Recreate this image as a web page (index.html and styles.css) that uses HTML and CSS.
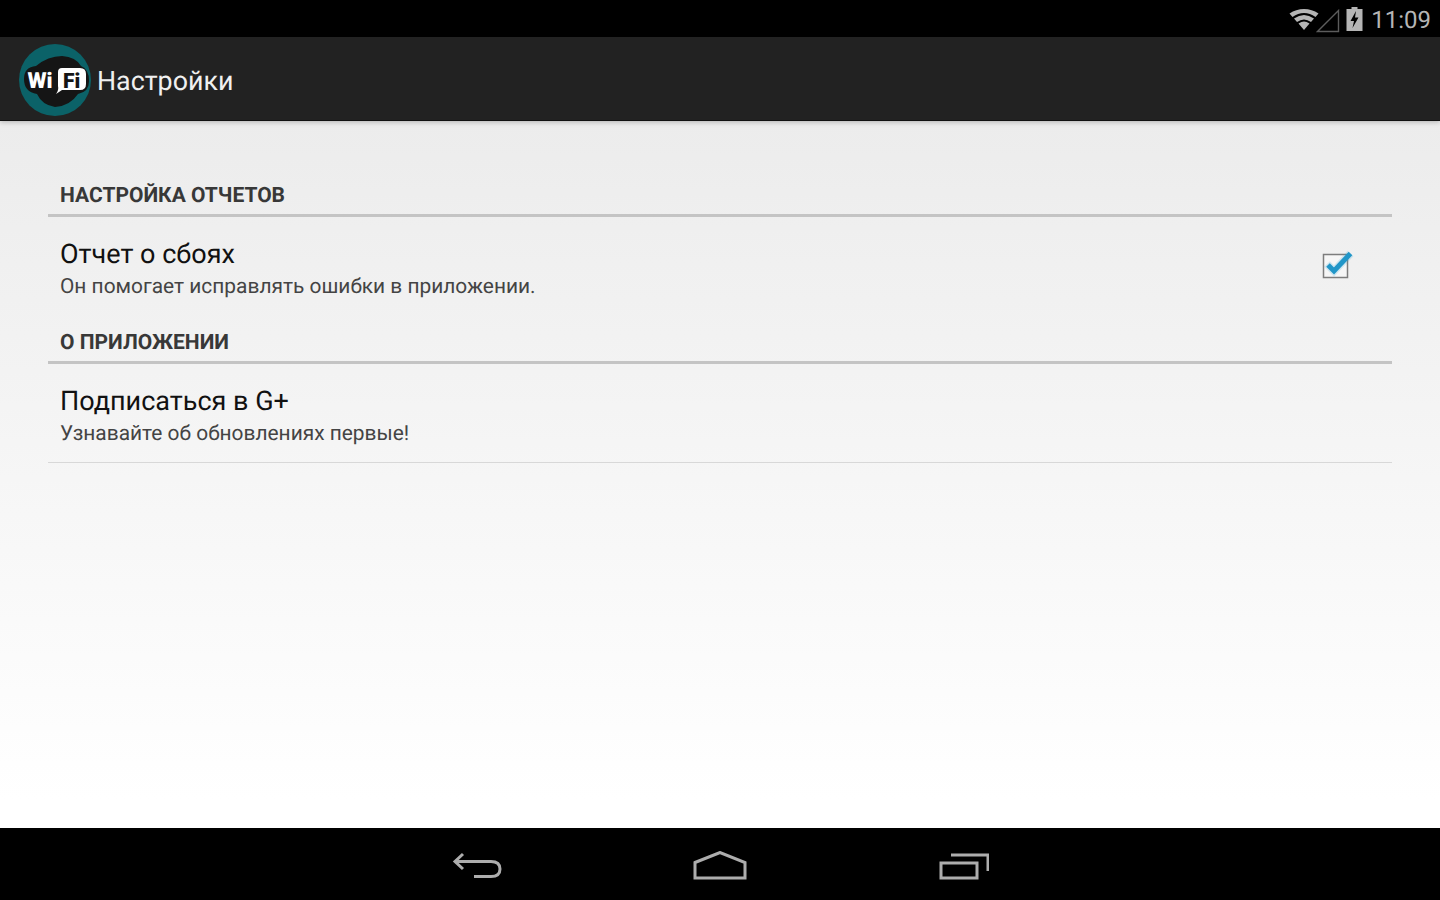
FILE: index.html
```html
<!DOCTYPE html>
<html lang="ru">
<head>
<meta charset="utf-8">
<title>Настройки</title>
<link rel="stylesheet" href="styles.css">
</head>
<body>
<div class="screen">
  <header class="status">
    <svg class="ic-wifi" width="30" height="24" viewBox="0 0 30 24"><path d="M0.500 6.500Q7 2 15 2T29.500 6.500L26.500 10Q21 6 15 6T3.500 10Z" fill="#b5b5b5"/><path d="M5 11.500Q10 8 15 8T25 11.500L22 15Q18.500 12.500 15 12.500T8 15Z" fill="#b5b5b5"/><path d="M9.500 16.500Q12.500 14.500 15 14.500T20.500 16.500L15 23Z" fill="#b5b5b5"/></svg>
    <svg class="ic-signal" width="24" height="24" viewBox="0 0 24 24"><path d="M1.500 22.500 22.500 1.500V22.500Z" fill="none" stroke="#5c5c5c" stroke-width="1.400"/></svg>
    <svg class="ic-batt" width="17" height="24" viewBox="0 0 17 24"><path d="M5.500 0h6v2h5v22H.5V2h5Z" fill="#b5b5b5"/><path d="M10 4 4.500 14H8L6.500 21l6-10.500H9Z" fill="#000"/></svg>
    <span class="clock">11:09</span>
  </header>
  <header class="actionbar">
    <svg class="logo" width="74" height="74" viewBox="0 0 74 74">
      <circle cx="37" cy="37" r="36" fill="#0b6268"/>
      <path d="M6 36Q6 24 18 23 30 13 44 13 58 14 63 23 71 26 71 38 71 49 60 51 52 63 37 64 24 62 19 51 6 49 6 36Z" fill="#151515"/>
      <text class="logo-wi" x="9.500" y="45">Wi</text>
      <path d="M44 25H62Q68 25 68 31V41Q68 47 62 47H44L38 51Q41 47 40 43V29Q40 25 44 25Z" fill="#fff"/>
      <text class="logo-fi" x="45" y="44.500">Fi</text>
    </svg>
    <h1 class="title">Настройки</h1>
  </header>
  <main class="content">
    <section class="group">
      <h2 class="group-title">НАСТРОЙКА ОТЧЕТОВ</h2>
      <div class="row">
        <div class="row-text">
          <div class="row-name">Отчет о сбоях</div>
          <div class="row-desc">Он помогает исправлять ошибки в приложении.</div>
        </div>
        <svg class="check" width="36" height="34" viewBox="0 0 36 34">
          <rect x="4.500" y="7.500" width="24" height="23" fill="#f6f6f6" stroke="#7d7d7d" stroke-width="1.500"/>
          <path d="M8 17 15 24 31.500 6.500" fill="none" stroke="#2a9fd0" stroke-width="8" opacity=".18"/>
          <path d="M9 18 15 24 31.500 6.500" fill="none" stroke="#2196c8" stroke-width="5"/>
        </svg>
      </div>
    </section>
    <section class="group">
      <h2 class="group-title">О ПРИЛОЖЕНИИ</h2>
      <div class="row row-last">
        <div class="row-text">
          <div class="row-name">Подписаться в G+</div>
          <div class="row-desc">Узнавайте об обновлениях первые!</div>
        </div>
      </div>
    </section>
  </main>
  <nav class="navbar">
    <svg class="nav-ic" width="52" height="30" viewBox="-1 0 52 30"><path d="M11 3 3 10.500 11 18M3 10.500H39Q48 10.500 48 18T39 25.500H22" fill="none" stroke="#adadad" stroke-width="3"/></svg>
    <svg class="nav-ic" width="54" height="30" viewBox="0 0 54 30"><path d="M2 11.500 27 1.500 52 11.500V27H2Z" fill="none" stroke="#adadad" stroke-width="3"/></svg>
    <svg class="nav-ic" width="52" height="30" viewBox="-1 0 52 30"><path d="M3 12H39V27H3Z" fill="none" stroke="#adadad" stroke-width="3"/><path d="M13 4H50V20" fill="none" stroke="#adadad" stroke-width="3"/></svg>
  </nav>
</div>
</body>
</html>
```

FILE: styles.css
```css
* { box-sizing: border-box; }
html, body { margin: 0; padding: 0; }
body { width: 1440px; height: 900px; overflow: hidden; font-family: Roboto, "Liberation Sans", sans-serif; text-rendering: geometricPrecision; }
.screen { width: 1440px; height: 900px; display: flex; flex-direction: column; background: #000; }
.status { height: 37px; flex: none; background: #000; display: flex; align-items: center; justify-content: flex-end; padding-right: 9px; }
.ic-wifi { margin-right: -3px; margin-top: 1px; }
.ic-signal { margin-right: 6px; margin-top: 4px; }
.ic-batt { margin-right: 8px; margin-top: 1px; }
.clock { color: #b5b5b5; font-size: 24px; line-height: 37px; padding-top: 4px; }
.actionbar { height: 84px; flex: none; background: #222; border-bottom: 1px solid #111; display: flex; align-items: center; padding-left: 18px; position: relative; z-index: 1; box-shadow: 0 1px 5px rgba(0,0,0,.25); }
.logo { flex: none; margin-top: 2px; }
.logo-wi { font: 900 22px Roboto, sans-serif; fill: #fff; }
.logo-fi { font: 900 21px Roboto, sans-serif; fill: #151515; }
.title { margin: 5px 0 0 5px; font-size: 26.800px; font-weight: 400; color: #f0f0f0; }
.content { height: 707px; flex: none; padding: 49px 48px 0; background: linear-gradient(#ececec, #ffffff 96%); }
.group-title { margin: 0; height: 47px; padding: 14px 12px 0; font-size: 21px; line-height: 25px; font-weight: 700; color: #383838; border-bottom: 3px solid #c4c4c4; }
.row { height: 100px; display: flex; align-items: flex-start; justify-content: space-between; padding: 19px 37px 0 12px; }
.row-last { height: 99px; border-bottom: 1px solid #d8d8d8; }
.row-name { font-size: 27px; line-height: 36px; color: #111; margin-bottom: 1px; }
.row-desc { font-size: 20.900px; line-height: 28px; color: #444; }
.check { margin-top: 11px; }
.navbar { height: 72px; flex: none; background: #000; display: flex; align-items: center; justify-content: center; gap: 190px; padding-top: 3px; }
.nav-ic { flex: none; }
```
